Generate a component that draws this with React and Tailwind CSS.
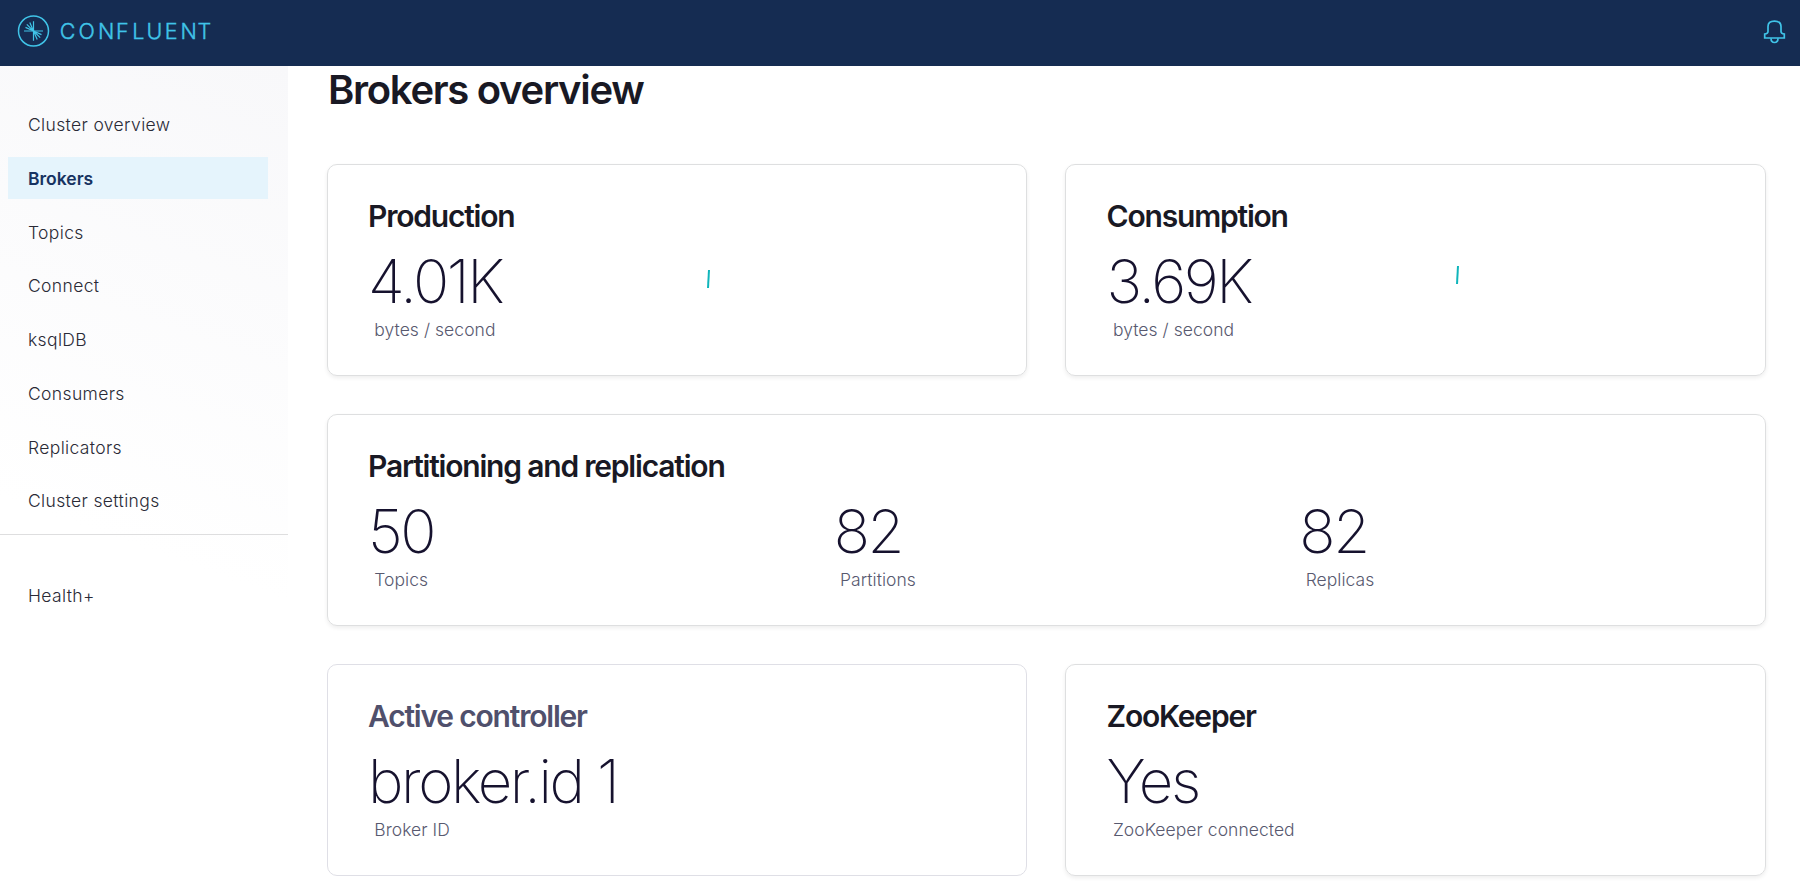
import React from 'react';

const NAV = ['Cluster overview', 'Brokers', 'Topics', 'Connect', 'ksqlDB', 'Consumers', 'Replicators', 'Cluster settings'];

function Logo() {
  return (
    <svg width="200" height="34" viewBox="0 0 200 34" fill="none" stroke="#40c4e8" className="block">
      <circle cx="18.5" cy="17" r="15" strokeWidth="1.5" />
      <g strokeWidth="1.2">
        <path d="M18.5 7.2v19.6M9 17h19" />
        <path d="M18.5 17l-8-3.6M18.5 17l-6.7-6.6M18.5 17l-3.7-8.6" />
        <path d="M18.5 17l8 3.6M18.5 17l6.7 6.6M18.5 17l3.7 8.6" />
      </g>
      <text
        x="44.7 63.6 82.9 100.9 117.2 131.4 149.7 165.5 182.6"
        y="24.6"
        fontFamily="Inter, sans-serif"
        fontWeight="300"
        fontSize="21.5"
        fill="#40c4e8"
        strokeWidth="0.4"
      >
        CONFLUENT
      </text>
    </svg>
  );
}

function Bell() {
  return (
    <svg width="24" height="27" viewBox="0 0 24 27" fill="none" stroke="#40c4e8" strokeWidth="1.7" className="block">
      <path d="M5 13.5V8.5C5 5 7.2 3.2 11.5 3.2s6.5 1.8 6.5 5.3v5c0 1.5 .8 2.3 3.3 2.5v4H1.7v-4C4.2 15.8 5 15 5 13.5z" />
      <path d="M8 20.2c0 2.5 1.3 4.3 3.5 4.3s3.5-1.8 3.5-4.3" />
    </svg>
  );
}

function NavItem({ label, active }) {
  return (
    <a
      className={
        active
          ? 'flex h-[41.75px] items-center bg-[#e5f4fc] pt-[1.7px] pl-5 text-[17.5px] font-semibold text-[#173361]'
          : 'flex h-[41.75px] items-center pt-[1.7px] pl-5 text-[17.5px] font-light tracking-[0.36px] text-[#2a2a36]'
      }
    >
      {label}
    </a>
  );
}

function Stat({ value, caption }) {
  return (
    <div>
      <div className="h-16 text-[60px] leading-[64px] font-extralight tracking-[-2.4px] whitespace-nowrap text-[#16122e]">{value}</div>
      <div className="mt-[5px] pl-[6.3px] text-[17.5px] leading-6 font-light tracking-[0.05px] text-[#58596f]">{caption}</div>
    </div>
  );
}

function Card({ title, muted, className = 'pl-[40px]', children }) {
  return (
    <section
      className={`h-[212px] rounded-[10px] border pt-[33px] ${
        muted ? 'border-[#dfdfe6]' : 'border-[#dedfe0] shadow-[0_2px_4px_rgba(0,0,0,0.07)]'
      } ${className}`}
    >
      <h2 className={`mb-[15px] text-[30px] leading-9 font-semibold tracking-[-1.2px] ${muted ? 'text-[#50506c]' : 'text-[#191924]'}`}>
        {title}
      </h2>
      {children}
    </section>
  );
}

function Spark({ className }) {
  return (
    <svg width="6" height="20" viewBox="0 0 6 20" className={className}>
      <path d="M4 1L3 19" stroke="#0fb5bb" strokeWidth="2" />
    </svg>
  );
}

export default function App() {
  return (
    <div className="flex h-[885px] w-[1800px] flex-col overflow-hidden bg-white font-['Inter',sans-serif]">
      <header className="flex h-[66px] shrink-0 items-start justify-between bg-[#152c52] pt-[14px] pr-[13px] pl-[15px]">
        <Logo />
        <div className="pt-1">
          <Bell />
        </div>
      </header>
      <div className="flex flex-1">
        <aside className="h-[819px] w-[288px] shrink-0 bg-[linear-gradient(200deg,#f8f8fa_0%,#ffffff_58%)]">
          <nav className="flex h-[469px] flex-col gap-3 border-b border-[#dededf] pt-[37.5px] pr-5 pl-2">
            {NAV.map((n) => (
              <NavItem key={n} label={n} active={n === 'Brokers'} />
            ))}
          </nav>
          <div className="pt-[39px] pl-2">
            <NavItem label="Health+" />
          </div>
        </aside>
        <main className="flex flex-1 flex-col pr-[34px] pl-[39px]">
          <h1 className="mb-[50px] h-12 pl-[1px] text-[40px] leading-[48px] font-semibold tracking-[-1.3px] text-[#191924]">Brokers overview</h1>
          <div className="grid grid-cols-[700px_701px] gap-[38px]">
            <Card title="Production">
              <div className="flex">
                <div className="w-[337px]">
                  <Stat value="4.01K" caption="bytes / second" />
                </div>
                <Spark className="mt-[19.5px]" />
              </div>
            </Card>
            <Card title="Consumption" className="pl-[40.6px]">
              <div className="flex">
                <div className="w-[347.4px]">
                  <Stat value="3.69K" caption="bytes / second" />
                </div>
                <Spark className="mt-[16px]" />
              </div>
            </Card>
            <Card title="Partitioning and replication" className="col-span-2 pl-[40px]">
              <div className="grid grid-cols-3">
                <Stat value="50" caption="Topics" />
                <Stat value="82" caption="Partitions" />
                <Stat value="82" caption="Replicas" />
              </div>
            </Card>
            <Card title="Active controller" muted>
              <Stat value="broker.id 1" caption="Broker ID" />
            </Card>
            <Card title="ZooKeeper" className="pl-[40.6px]">
              <Stat value="Yes" caption="ZooKeeper connected" />
            </Card>
          </div>
        </main>
      </div>
    </div>
  );
}
